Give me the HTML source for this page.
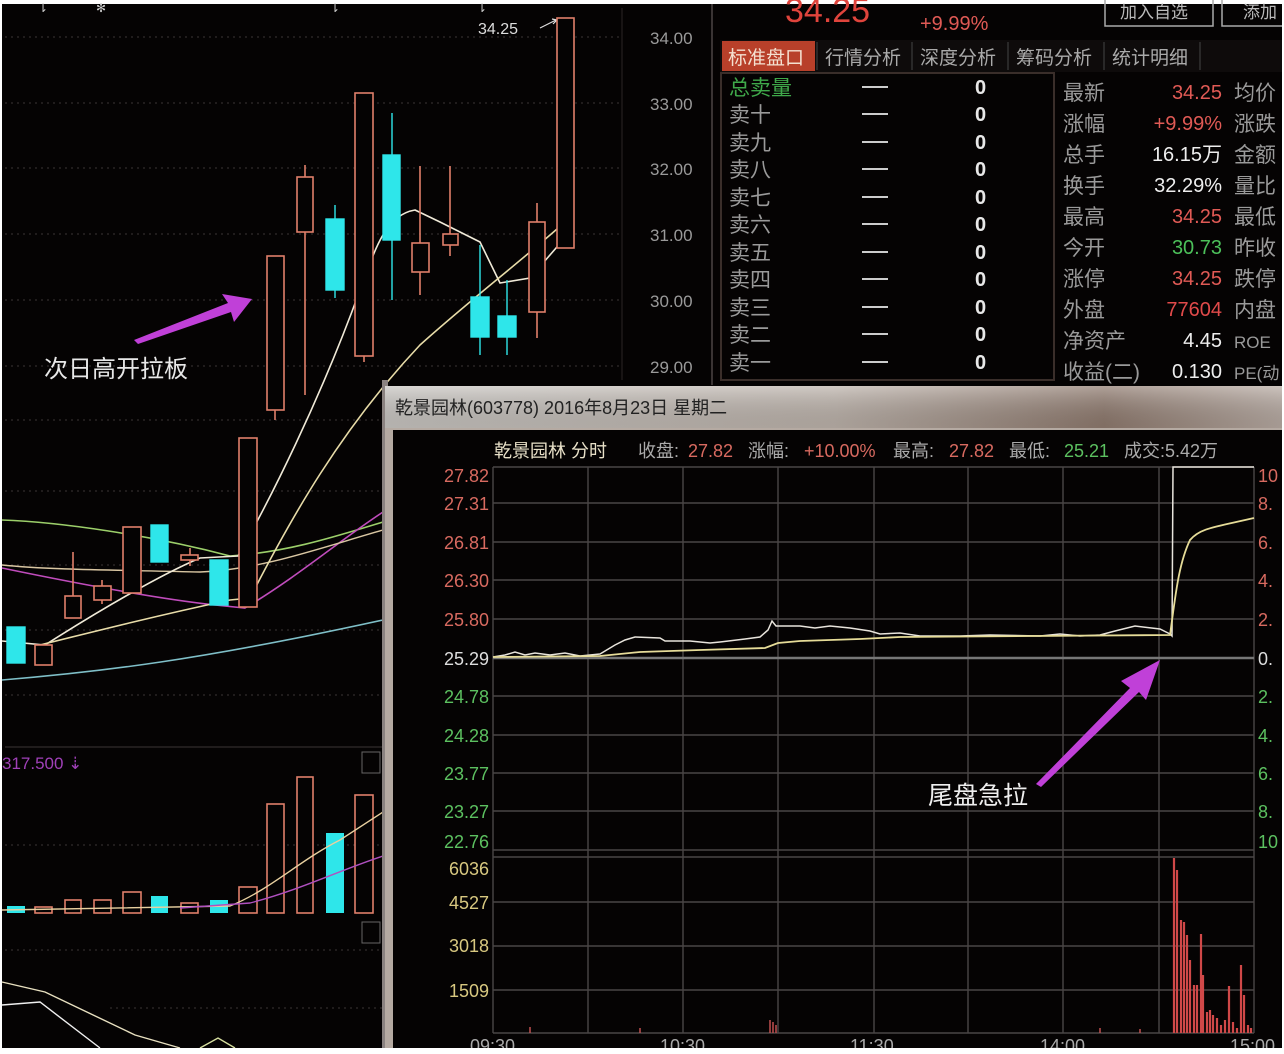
<!DOCTYPE html>
<html><head><meta charset="utf-8"><style>
html,body{margin:0;padding:0;background:#fff}
svg{display:block}
text{font-family:"Liberation Sans","Noto Sans CJK SC",sans-serif}
</style></head><body>
<svg width="1284" height="1054" viewBox="0 0 1284 1054" xmlns="http://www.w3.org/2000/svg">
<defs>
<linearGradient id="tb" x1="0" y1="0" x2="1" y2="0">
<stop offset="0" stop-color="#c9c6c2"/><stop offset="0.5" stop-color="#bdb3ab"/><stop offset="0.8" stop-color="#8f7a6e"/><stop offset="1" stop-color="#b9aca4"/></linearGradient>
<linearGradient id="tbv" x1="0" y1="0" x2="0" y2="1"><stop offset="0" stop-color="#fff" stop-opacity="0.3"/><stop offset="1" stop-color="#000" stop-opacity="0.1"/></linearGradient>
</defs>
<rect width="1284" height="1054" fill="#fff"/>
<rect x="2" y="4" width="1280" height="1044" fill="#050303"/>

<g stroke="#3a3434" stroke-width="1" stroke-dasharray="2,4">
<line x1="5" y1="37" x2="620" y2="37"/><line x1="5" y1="103" x2="620" y2="103"/><line x1="5" y1="168" x2="620" y2="168"/>
<line x1="5" y1="234" x2="620" y2="234"/><line x1="5" y1="300" x2="620" y2="300"/><line x1="5" y1="366" x2="620" y2="366"/>
<line x1="5" y1="420" x2="383" y2="420"/><line x1="5" y1="491" x2="383" y2="491"/><line x1="5" y1="565" x2="383" y2="565"/><line x1="5" y1="630" x2="383" y2="630"/><line x1="5" y1="695" x2="383" y2="695"/>
<line x1="5" y1="845" x2="383" y2="845"/><line x1="5" y1="950" x2="383" y2="950"/><line x1="110" y1="1008" x2="383" y2="1008"/>
</g>
<line x1="622" y1="8" x2="622" y2="380" stroke="#2a2626"/>
<line x1="712" y1="4" x2="712" y2="385" stroke="#3a3434" stroke-width="2"/>
<line x1="5" y1="747" x2="383" y2="747" stroke="#3a3434"/>
<g fill="#ccc" font-size="12"><text x="38" y="12">⇂</text><text x="96" y="12">✻</text><text x="330" y="12">⇂</text><text x="477" y="12">⇂</text></g>

<g fill="#9a9a9a" font-size="17"><text x="650" y="44">34.00</text><text x="650" y="110">33.00</text><text x="650" y="175">32.00</text><text x="650" y="241">31.00</text><text x="650" y="307">30.00</text><text x="650" y="373">29.00</text></g>
<text x="478" y="34" fill="#ddd" font-size="16">34.25</text>
<path d="M540 28 L556 20 M552 19 L557 20 L553 24" stroke="#ddd" fill="none" stroke-width="1.2"/>

<path d="M2 520 C60 522 150 535 230 556 C290 552 340 535 383 522" stroke="#9ccf6a" stroke-width="1.6" fill="none"/>
<path d="M2 568 C60 580 150 598 215 605 L245 608 C300 575 340 540 383 512" stroke="#c04cbc" stroke-width="1.6" fill="none"/>
<path d="M2 680 C100 672 200 660 383 620" stroke="#7fbfc8" stroke-width="1.6" fill="none"/>
<path d="M2 565 C50 570 120 570 200 572 C260 570 320 548 383 530" stroke="#d9c6a2" stroke-width="1.4" fill="none"/>
<path d="M2 641 L45 645 C100 610 160 575 200 558 L238 556 C270 500 320 400 360 290 C375 250 385 215 415 210 L440 222 L480 242 L500 283 L530 278 L563 240" stroke="#f0ead8" stroke-width="1.6" fill="none"/>
<path d="M40 645 C100 630 160 615 230 600 L250 598 C290 520 340 430 420 345 C470 300 520 262 565 222" stroke="#e8dca8" stroke-width="1.6" fill="none"/>

<g fill="#050303" stroke="#e07f6a" stroke-width="1.6">
<line x1="275" y1="256" x2="275" y2="420"/><rect x="267" y="256" width="17" height="154"/>
<line x1="305" y1="165" x2="305" y2="395"/><rect x="297" y="177" width="16" height="55"/>
<line x1="364" y1="93" x2="364" y2="362"/><rect x="355" y="93" width="18" height="263"/>
<line x1="420" y1="166" x2="420" y2="295"/><rect x="412" y="243" width="17" height="29"/>
<line x1="450" y1="166" x2="450" y2="256"/><rect x="443" y="234" width="15" height="11"/>
<line x1="537" y1="203" x2="537" y2="338"/><rect x="529" y="222" width="16" height="90"/>
<rect x="557" y="18" width="17" height="230"/>
<rect x="239" y="438" width="18" height="169"/>
<line x1="190" y1="548" x2="190" y2="566"/><rect x="181" y="555" width="17" height="5"/>
<rect x="123" y="527" width="18" height="66"/>
<line x1="102" y1="580" x2="102" y2="604"/><rect x="94" y="586" width="17" height="14"/>
<line x1="73" y1="552" x2="73" y2="618"/><rect x="65" y="596" width="16" height="22"/>
<rect x="35" y="645" width="17" height="20"/>
</g>
<g fill="#2ee6ea" stroke="#2ee6ea" stroke-width="1.4">
<line x1="335" y1="205" x2="335" y2="298"/><rect x="326" y="219" width="18" height="71"/>
<line x1="392" y1="113" x2="392" y2="300"/><rect x="383" y="155" width="17" height="85"/>
<line x1="480" y1="245" x2="480" y2="355"/><rect x="471" y="297" width="18" height="40"/>
<line x1="507" y1="280" x2="507" y2="355"/><rect x="498" y="316" width="18" height="21"/>
<rect x="210" y="560" width="18" height="45"/>
<rect x="151" y="525" width="17" height="37"/>
<rect x="7" y="627" width="18" height="36"/>
</g>

<polygon points="134,340 228,303 222,294 252,299 234,322 231,312 138,344" fill="#c040d8"/>
<text x="44" y="377" fill="#e8e8e8" font-size="24">次日高开拉板</text>

<text x="2" y="769" fill="#a040b8" font-size="17">317.500 ⇣</text>
<rect x="362" y="752" width="18" height="21" fill="none" stroke="#666"/>
<rect x="362" y="922" width="18" height="21" fill="none" stroke="#666"/>
<g fill="#050303" stroke="#e07f6a" stroke-width="1.6">
<rect x="35" y="907" width="17" height="6"/><rect x="65" y="900" width="16" height="13"/><rect x="94" y="900" width="17" height="13"/>
<rect x="123" y="892" width="18" height="21"/><rect x="181" y="903" width="17" height="10"/><rect x="239" y="887" width="18" height="26"/>
<rect x="267" y="804" width="17" height="109"/><rect x="297" y="777" width="16" height="136"/><rect x="355" y="795" width="18" height="118"/>
</g>
<g fill="#2ee6ea"><rect x="7" y="906" width="18" height="7"/><rect x="151" y="896" width="17" height="17"/><rect x="210" y="900" width="18" height="13"/><rect x="326" y="833" width="18" height="80"/></g>
<path d="M2 910 L230 906 C270 890 300 860 340 840 L383 812" stroke="#e8d0a0" stroke-width="1.4" fill="none"/>
<path d="M180 908 L250 903 C300 890 340 870 383 856" stroke="#b050c0" stroke-width="1.4" fill="none"/>
<path d="M2 982 L45 992 L135 1035 L180 1048" stroke="#e8e0c0" stroke-width="1.4" fill="none"/>
<path d="M2 1005 L40 1002 L100 1048" stroke="#f0f0f0" stroke-width="1.4" fill="none"/>
<path d="M200 1048 L218 1038 L235 1048" stroke="#d8e0a0" stroke-width="1.4" fill="none"/>
<rect x="382" y="380" width="6" height="668" fill="#8a8280"/>

<text x="785" y="22" fill="#e0443c" font-size="34">34.25</text>
<text x="920" y="30" fill="#e05a55" font-size="20">+9.99%</text>
<rect x="1105" y="-2" width="108" height="28" fill="none" stroke="#aaa" stroke-width="1.5"/>
<text x="1120" y="18" fill="#bbb" font-size="17">加入自选</text>
<rect x="1222" y="-2" width="70" height="28" fill="none" stroke="#aaa" stroke-width="1.5"/>
<text x="1243" y="18" fill="#bbb" font-size="17">添加</text>
<rect x="720" y="40" width="562" height="32" fill="#0e0b0b"/>
<rect x="722" y="41" width="93" height="30" fill="#b8402a"/>
<g stroke="#444"><line x1="817" y1="42" x2="817" y2="70"/><line x1="912" y1="42" x2="912" y2="70"/><line x1="1008" y1="42" x2="1008" y2="70"/><line x1="1104" y1="42" x2="1104" y2="70"/><line x1="1200" y1="42" x2="1200" y2="70"/></g>
<g font-size="19"><text x="728" y="64" fill="#f4e0d0">标准盘口</text><text x="825" y="64" fill="#aaa">行情分析</text><text x="920" y="64" fill="#aaa">深度分析</text><text x="1016" y="64" fill="#aaa">筹码分析</text><text x="1112" y="64" fill="#aaa">统计明细</text></g>
<rect x="721" y="73" width="333" height="307" fill="none" stroke="#3a2e2a" stroke-width="2"/>
<g font-size="21" fill="#9a9a9a">
<text x="729" y="95" fill="#3fa84a">总卖量</text>
<text x="729" y="122">卖十</text><text x="729" y="150">卖九</text><text x="729" y="177">卖八</text><text x="729" y="205">卖七</text><text x="729" y="232">卖六</text><text x="729" y="260">卖五</text><text x="729" y="287">卖四</text><text x="729" y="315">卖三</text><text x="729" y="342">卖二</text><text x="729" y="370">卖一</text>
</g>
<g stroke="#ccc" stroke-width="2">
<line x1="862" y1="87" x2="888" y2="87"/><line x1="862" y1="114" x2="888" y2="114"/><line x1="862" y1="142" x2="888" y2="142"/><line x1="862" y1="169" x2="888" y2="169"/><line x1="862" y1="197" x2="888" y2="197"/><line x1="862" y1="224" x2="888" y2="224"/><line x1="862" y1="252" x2="888" y2="252"/><line x1="862" y1="279" x2="888" y2="279"/><line x1="862" y1="307" x2="888" y2="307"/><line x1="862" y1="334" x2="888" y2="334"/><line x1="862" y1="362" x2="888" y2="362"/>
</g>
<g font-size="20" fill="#e8e8e8" font-weight="bold"><text x="975" y="94">0</text><text x="975" y="121">0</text><text x="975" y="149">0</text><text x="975" y="176">0</text><text x="975" y="204">0</text><text x="975" y="231">0</text><text x="975" y="259">0</text><text x="975" y="286">0</text><text x="975" y="314">0</text><text x="975" y="341">0</text><text x="975" y="369">0</text></g>
<g font-size="21" fill="#9a9a9a"><text x="1063" y="100">最新</text><text x="1063" y="131">涨幅</text><text x="1063" y="162">总手</text><text x="1063" y="193">换手</text><text x="1063" y="224">最高</text><text x="1063" y="255">今开</text><text x="1063" y="286">涨停</text><text x="1063" y="317">外盘</text><text x="1063" y="348">净资产</text><text x="1063" y="379">收益(二)</text>
<text x="1234" y="100">均价</text><text x="1234" y="131">涨跌</text><text x="1234" y="162">金额</text><text x="1234" y="193">量比</text><text x="1234" y="224">最低</text><text x="1234" y="255">昨收</text><text x="1234" y="286">跌停</text><text x="1234" y="317">内盘</text><text x="1234" y="348" font-size="17">ROE</text><text x="1234" y="379" font-size="17">PE(动</text></g>
<g font-size="20" text-anchor="end"><text x="1222" y="99" fill="#e05a55">34.25</text><text x="1222" y="130" fill="#e05a55">+9.99%</text><text x="1222" y="161" fill="#eee">16.15万</text><text x="1222" y="192" fill="#eee">32.29%</text><text x="1222" y="223" fill="#e05a55">34.25</text><text x="1222" y="254" fill="#4cc05a">30.73</text><text x="1222" y="285" fill="#e05a55">34.25</text><text x="1222" y="316" fill="#e04a4a">77604</text><text x="1222" y="347" fill="#eee">4.45</text><text x="1222" y="378" fill="#eee">0.130</text></g>

<rect x="385" y="386" width="899" height="668" fill="#b5aaa2"/>
<rect x="385" y="386" width="899" height="42" fill="url(#tb)"/>
<rect x="385" y="386" width="899" height="42" fill="url(#tbv)"/>
<text x="395" y="414" fill="#222" font-size="18">乾景园林(603778) 2016年8月23日 星期二</text>
<rect x="393" y="430" width="889" height="620" fill="#050303"/>
<g font-size="18"><text x="494" y="457" fill="#e8e0c8">乾景园林 分时</text><text x="638" y="457" fill="#aaa">收盘:</text><text x="688" y="457" fill="#d86a60">27.82</text><text x="748" y="457" fill="#aaa">涨幅:</text><text x="804" y="457" fill="#d86a60">+10.00%</text><text x="893" y="457" fill="#aaa">最高:</text><text x="949" y="457" fill="#d86a60">27.82</text><text x="1009" y="457" fill="#aaa">最低:</text><text x="1064" y="457" fill="#5cc060">25.21</text><text x="1124" y="457" fill="#aaa">成交:5.42万</text></g>
<g stroke="#4a4646" stroke-width="1.4">
<line x1="493" y1="467" x2="1254" y2="467"/><line x1="493" y1="503" x2="1254" y2="503"/><line x1="493" y1="542" x2="1254" y2="542"/><line x1="493" y1="580" x2="1254" y2="580"/><line x1="493" y1="619" x2="1254" y2="619"/><line x1="493" y1="696" x2="1254" y2="696"/><line x1="493" y1="735" x2="1254" y2="735"/><line x1="493" y1="773" x2="1254" y2="773"/><line x1="493" y1="811" x2="1254" y2="811"/><line x1="493" y1="850" x2="1254" y2="850"/>
<line x1="493" y1="857" x2="1254" y2="857"/><line x1="493" y1="902" x2="1254" y2="902"/><line x1="493" y1="946" x2="1254" y2="946"/><line x1="493" y1="990" x2="1254" y2="990"/><line x1="493" y1="1033" x2="1254" y2="1033"/>
<line x1="493" y1="467" x2="493" y2="1033"/><line x1="588" y1="467" x2="588" y2="1033"/><line x1="683" y1="467" x2="683" y2="1033"/><line x1="778" y1="467" x2="778" y2="1033"/><line x1="874" y1="467" x2="874" y2="1033"/><line x1="968" y1="467" x2="968" y2="1033"/><line x1="1063" y1="467" x2="1063" y2="1033"/><line x1="1159" y1="467" x2="1159" y2="1033"/><line x1="1254" y1="467" x2="1254" y2="1033"/>
</g>
<line x1="493" y1="658" x2="1254" y2="658" stroke="#777" stroke-width="2.5"/>
<g font-size="18" text-anchor="end"><text x="489" y="482" fill="#d86a60">27.82</text><text x="489" y="510" fill="#d86a60">27.31</text><text x="489" y="549" fill="#d86a60">26.81</text><text x="489" y="587" fill="#d86a60">26.30</text><text x="489" y="626" fill="#d86a60">25.80</text><text x="489" y="665" fill="#ddd">25.29</text><text x="489" y="703" fill="#5cc060">24.78</text><text x="489" y="742" fill="#5cc060">24.28</text><text x="489" y="780" fill="#5cc060">23.77</text><text x="489" y="818" fill="#5cc060">23.27</text><text x="489" y="848" fill="#5cc060">22.76</text>
<text x="489" y="875" fill="#d8c880">6036</text><text x="489" y="909" fill="#d8c880">4527</text><text x="489" y="952" fill="#d8c880">3018</text><text x="489" y="997" fill="#d8c880">1509</text></g>
<g font-size="18"><text x="1258" y="482" fill="#d86a60">10</text><text x="1258" y="510" fill="#d86a60">8.</text><text x="1258" y="549" fill="#d86a60">6.</text><text x="1258" y="587" fill="#d86a60">4.</text><text x="1258" y="626" fill="#d86a60">2.</text><text x="1258" y="665" fill="#ddd">0.</text><text x="1258" y="703" fill="#5cc060">2.</text><text x="1258" y="742" fill="#5cc060">4.</text><text x="1258" y="780" fill="#5cc060">6.</text><text x="1258" y="818" fill="#5cc060">8.</text><text x="1258" y="848" fill="#5cc060">10</text></g>
<g font-size="18" fill="#aaa"><text x="470" y="1052">09:30</text><text x="660" y="1052">10:30</text><text x="850" y="1052">11:30</text><text x="1040" y="1052">14:00</text><text x="1230" y="1052">15:00</text></g>
<path d="M493 657 L505 655 L515 652 L525 655 L535 653 L550 655 L565 653 L580 656 L600 654 L615 645 L625 640 L635 637 L660 638 L665 641 L690 641 L710 643 L720 642 L745 639 L760 637 L768 630 L772 621 L776 626 L800 626 L815 628 L830 626 L850 628 L870 631 L880 634 L900 633 L920 636 L960 636 L990 635 L1040 636 L1060 634 L1080 636 L1100 635 L1115 631 L1135 626 L1160 629 L1170 634 L1172 636 L1173 467 L1254 467" stroke="#e8e4dc" stroke-width="1.5" fill="none"/>
<path d="M493 657 L600 656 L640 652 L700 650 L765 648 L778 643 L800 641 L860 639 L900 637 L1170 635 C1175 600 1178 565 1190 540 C1200 528 1215 527 1254 518" stroke="#e6dc98" stroke-width="1.8" fill="none"/>
<path d="M1174 1033 V858 M1177 1033 V870 M1181 1033 V920 M1184 1033 V922 M1187 1033 V935 M1190 1033 V960 M1194 1033 V985 M1197 1033 V985 M1201 1033 V934 M1203 1033 V975 M1207 1033 V1012 M1210 1033 V1010 M1213 1033 V1015 M1217 1033 V1018 M1221 1033 V1025 M1225 1033 V1020 M1229 1033 V986 M1233 1033 V1022 M1237 1033 V1028 M1241 1033 V965 M1244 1033 V995 M1248 1033 V1025 M1251 1033 V1028" stroke="#d04848" stroke-width="2.2"/>
<path d="M770 1033 V1020 M773 1033 V1022 M776 1033 V1025 M530 1033 V1027 M640 1033 V1028 M1100 1033 V1028 M1140 1033 V1029" stroke="#c05050" stroke-width="1.5"/>
<polygon points="1036,784 1130,688 1121,681 1160,660 1146,700 1139,692 1041,787" fill="#c040d8"/>
<text x="928" y="804" fill="#eee" font-size="25">尾盘急拉</text>
<rect x="1282" y="0" width="2" height="1054" fill="#fff"/>
<rect x="0" y="1048" width="1284" height="6" fill="#fff"/>
</svg>
</body></html>
